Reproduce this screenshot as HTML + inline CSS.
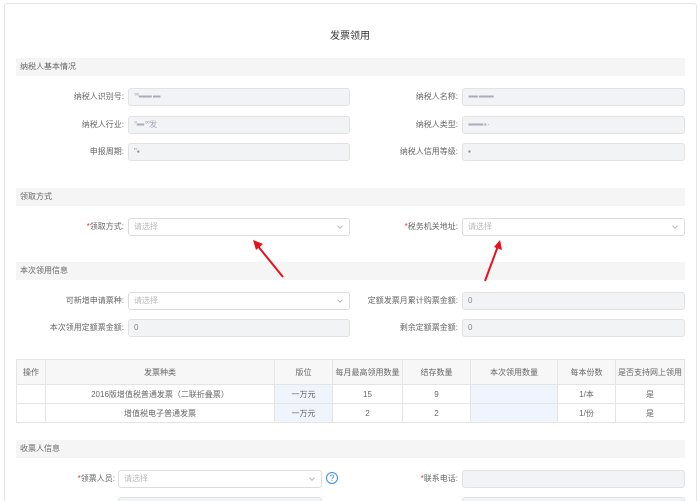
<!DOCTYPE html>
<html><head><meta charset="utf-8"><style>
*{box-sizing:border-box;margin:0;padding:0}
html,body{width:700px;height:501px;overflow:hidden}
body{background:#fff;font-family:"Liberation Sans","Noto Sans CJK SC",sans-serif;font-size:8px;color:#666;position:relative}
.a{position:absolute}
.card{left:4px;top:3px;width:693px;height:540px;border:1px solid #e4e4e4;border-radius:3px}
.sec{left:16px;width:669px;height:18px;background:#f5f5f5;line-height:18px;padding-left:4px;color:#666}
.in{height:18px;background:#f2f3f5;border:1px solid #e2e2e2;border-radius:3px;line-height:16px;padding-left:5px;color:#888}
.sel{height:18px;background:#fff;border:1px solid #dcdcdc;border-radius:3px;line-height:16px;padding-left:5px;color:#bbb}
.sel::after{content:"";position:absolute;right:7px;top:5px;width:3px;height:3px;border-right:1px solid #bbb;border-bottom:1px solid #bbb;transform:rotate(45deg)}
.lb{text-align:right;line-height:18px;color:#666}
.r{color:#e33}
table{position:absolute;left:16px;top:359px;width:669px;border-collapse:collapse;font-size:8px;color:#666}
td,th{border:1px solid #e4e4e4;text-align:center;font-weight:normal;height:19px}
th{background:#f7f7f7;height:25px}
.bl{background:#f0f5fd}
.blur{color:#aab;letter-spacing:-1px}
</style></head><body>
<div class="a card"></div>
<div class="a" style="left:0;width:700px;top:27px;text-align:center;font-size:10px;color:#333">发票领用</div>

<div class="a sec" style="top:58px">纳税人基本情况</div>
<div class="a lb" style="left:30px;width:94px;top:88px">纳税人识别号:</div>
<div class="a in blur" style="left:128px;width:222px;top:88px">°°▪▪▪▪▪▪▪ ▪▪▪▪</div>
<div class="a lb" style="left:360px;width:98px;top:88px">纳税人名称:</div>
<div class="a in blur" style="left:462px;width:223px;top:88px">▪▪▪▪▪ ▪▪▪▪▪▪▪▪</div>
<div class="a lb" style="left:30px;width:94px;top:116px">纳税人行业:</div>
<div class="a in blur" style="left:128px;width:222px;top:116px">°▪▪▪▪ °°发</div>
<div class="a lb" style="left:360px;width:98px;top:116px">纳税人类型:</div>
<div class="a in blur" style="left:462px;width:223px;top:116px">▪▪▪▪▪▪▪▪ ▪ ·</div>
<div class="a lb" style="left:30px;width:94px;top:143px">申报周期:</div>
<div class="a in" style="left:128px;width:222px;top:143px">"▪</div>
<div class="a lb" style="left:360px;width:98px;top:143px">纳税人信用等级:</div>
<div class="a in" style="left:462px;width:223px;top:143px">▪</div>

<div class="a sec" style="top:188px">领取方式</div>
<div class="a lb" style="left:30px;width:94px;top:218px"><span class="r">*</span>领取方式:</div>
<div class="a sel" style="left:128px;width:222px;top:218px">请选择</div>
<div class="a lb" style="left:360px;width:98px;top:218px"><span class="r">*</span>税务机关地址:</div>
<div class="a sel" style="left:462px;width:223px;top:218px">请选择</div>

<div class="a sec" style="top:262px">本次领用信息</div>
<div class="a lb" style="left:30px;width:94px;top:292px">可新增申请票种:</div>
<div class="a sel" style="left:128px;width:222px;top:292px">请选择</div>
<div class="a lb" style="left:360px;width:98px;top:292px">定额发票月累计购票金额:</div>
<div class="a in" style="left:462px;width:223px;top:292px">0</div>
<div class="a lb" style="left:30px;width:94px;top:319px">本次领用定额票金额:</div>
<div class="a in" style="left:128px;width:222px;top:319px">0</div>
<div class="a lb" style="left:360px;width:98px;top:319px">剩余定额票金额:</div>
<div class="a in" style="left:462px;width:223px;top:319px">0</div>

<table>
<tr><th style="width:29px">操作</th><th style="width:229px">发票种类</th><th style="width:58px">版位</th><th style="width:70px">每月最高领用数量</th><th style="width:68px">结存数量</th><th style="width:87px">本次领用数量</th><th style="width:58px">每本份数</th><th>是否支持网上领用</th></tr>
<tr><td></td><td>2016版增值税普通发票（二联折叠票）</td><td class="bl">一万元</td><td>15</td><td>9</td><td class="bl"></td><td>1/本</td><td>是</td></tr>
<tr><td></td><td>增值税电子普通发票</td><td class="bl">一万元</td><td>2</td><td>2</td><td class="bl"></td><td>1/份</td><td>是</td></tr>
</table>

<div class="a sec" style="top:440px">收票人信息</div>
<div class="a lb" style="left:30px;width:85px;top:470px"><span class="r">*</span>领票人员:</div>
<div class="a sel" style="left:118px;width:204px;top:470px">请选择</div>
<div class="a" style="left:326px;top:472px;width:12px;height:12px;border:1px solid #3a8ee6;border-radius:50%;color:#3a8ee6;font-size:9px;line-height:10px;text-align:center">?</div>
<div class="a lb" style="left:360px;width:98px;top:470px"><span class="r">*</span>联系电话:</div>
<div class="a in" style="left:462px;width:223px;top:470px"></div>
<div class="a in" style="left:118px;width:204px;top:497px"></div>
<div class="a in" style="left:462px;width:223px;top:497px"></div>

<svg class="a" style="left:0;top:0" width="700" height="501">
<g stroke="#e8101a" stroke-width="2" fill="#e8101a">
<line x1="283" y1="277" x2="257" y2="245"/>
<polygon points="253,240 263,244 256,250" stroke="none"/>
<line x1="485" y1="281" x2="498" y2="246"/>
<polygon points="500,240 502,250 494,247" stroke="none"/>
</g></svg>
</body></html>
